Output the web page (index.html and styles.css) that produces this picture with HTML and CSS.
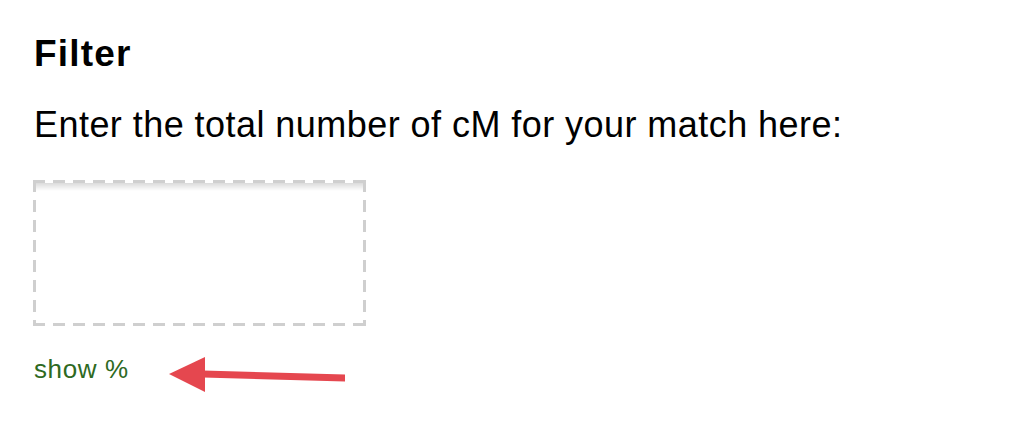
FILE: index.html
```html
<!DOCTYPE html>
<html>
<head>
<meta charset="utf-8">
<link rel="stylesheet" href="styles.css">
</head>
<body>
<div class="page">
  <h2 class="title">Filter</h2>
  <p class="prompt">Enter the total number of cM for your match here:</p>
  <div class="field"></div>
  <div class="row">
    <a class="toggle">show %</a>
    <svg class="arrow" width="180" height="40" viewBox="0 0 180 40">
      <polygon points="0,18 36,1 36,36" fill="#e5474f"/>
      <polygon points="34,14.5 176,18.5 176,25.5 34,21.5" fill="#e5474f"/>
    </svg>
  </div>
</div>
</body>
</html>
```
FILE: styles.css
```css
html, body {
  margin: 0;
  padding: 0;
  background: #fff;
}
.page {
  padding: 30px 0 0 34px;
  font-family: "Liberation Sans", Arial, sans-serif;
  color: #000;
}
.title {
  margin: 0;
  font-size: 37px;
  font-weight: bold;
  letter-spacing: 1.2px;
  line-height: 48px;
}
.prompt {
  margin: 27px 0 0 0;
  font-size: 36px;
  letter-spacing: 0.45px;
  line-height: 40px;
}
.field {
  margin-top: 35px;
  margin-left: -1px;
  width: 333px;
  height: 146px;
  box-sizing: border-box;
  background:
    repeating-linear-gradient(to right, #cfcfcf 0 12px, transparent 12px 20px) top left / 100% 3px no-repeat,
    repeating-linear-gradient(to right, #cfcfcf 0 12px, transparent 12px 20px) bottom left / 100% 3px no-repeat,
    repeating-linear-gradient(to bottom, #cfcfcf 0 12px, transparent 12px 20px) top left / 3px 100% no-repeat,
    repeating-linear-gradient(to bottom, #cfcfcf 0 12px, transparent 12px 20px) top right / 3px 100% no-repeat,
    linear-gradient(to bottom, rgba(0,0,0,0.14), rgba(0,0,0,0)) left 3px / 100% 8px no-repeat,
    #fff;
}
.row {
  display: flex;
  align-items: center;
  margin-top: 16px;
}
.toggle {
  font-size: 26px;
  letter-spacing: 0.6px;
  color: #2e6a1f;
  line-height: 40px;
}
.arrow {
  margin-left: 40px;
  margin-top: 14px;
}
```
